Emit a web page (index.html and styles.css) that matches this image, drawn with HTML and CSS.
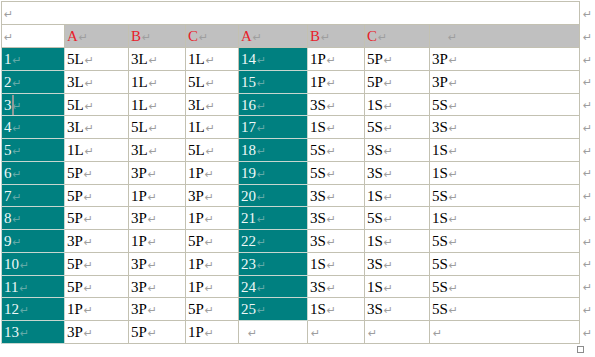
FILE: index.html
```html
<!DOCTYPE html>
<html>
<head>
<meta charset="utf-8">
<link rel="stylesheet" href="styles.css">
</head>
<body>
<div class="doc">
<table class="grid">
<colgroup>
<col class="c1"><col class="c2"><col class="c3"><col class="c4"><col class="c5"><col class="c6"><col class="c7"><col class="c8"><col class="cx">
</colgroup>
<tr class="top"><td colspan="8"><span class="pm">↵</span></td><td class="eor"><span class="pm">↵</span></td></tr>
<tr class="head"><td class="blank"><span class="pm">↵</span></td><td class="h"><span class="lbl">A</span><span class="pm">↵</span></td><td class="h"><span class="lbl">B</span><span class="pm">↵</span></td><td class="h"><span class="lbl">C</span><span class="pm">↵</span></td><td class="h"><span class="lbl">A</span><span class="pm">↵</span></td><td class="h"><span class="lbl">B</span><span class="pm">↵</span></td><td class="h"><span class="lbl">C</span><span class="pm">↵</span></td><td class="h far"><span class="pm">↵</span></td><td class="eor"><span class="pm">↵</span></td></tr>
<tr><td class="n">1<span class="pm">↵</span></td><td>5L<span class="pm">↵</span></td><td>3L<span class="pm">↵</span></td><td>1L<span class="pm">↵</span></td><td class="n">14<span class="pm">↵</span></td><td>1P<span class="pm">↵</span></td><td>5P<span class="pm">↵</span></td><td>3P<span class="pm">↵</span></td><td class="eor"><span class="pm">↵</span></td></tr>
<tr><td class="n">2<span class="pm">↵</span></td><td>3L<span class="pm">↵</span></td><td>1L<span class="pm">↵</span></td><td>5L<span class="pm">↵</span></td><td class="n">15<span class="pm">↵</span></td><td>1P<span class="pm">↵</span></td><td>5P<span class="pm">↵</span></td><td>3P<span class="pm">↵</span></td><td class="eor"><span class="pm">↵</span></td></tr>
<tr><td class="n cur">3<span class="caret"></span><span class="pm">↵</span></td><td>5L<span class="pm">↵</span></td><td>1L<span class="pm">↵</span></td><td>3L<span class="pm">↵</span></td><td class="n">16<span class="pm">↵</span></td><td>3S<span class="pm">↵</span></td><td>1S<span class="pm">↵</span></td><td>5S<span class="pm">↵</span></td><td class="eor"><span class="pm">↵</span></td></tr>
<tr><td class="n">4<span class="pm">↵</span></td><td>3L<span class="pm">↵</span></td><td>5L<span class="pm">↵</span></td><td>1L<span class="pm">↵</span></td><td class="n">17<span class="pm">↵</span></td><td>1S<span class="pm">↵</span></td><td>5S<span class="pm">↵</span></td><td>3S<span class="pm">↵</span></td><td class="eor"><span class="pm">↵</span></td></tr>
<tr><td class="n">5<span class="pm">↵</span></td><td>1L<span class="pm">↵</span></td><td>3L<span class="pm">↵</span></td><td>5L<span class="pm">↵</span></td><td class="n">18<span class="pm">↵</span></td><td>5S<span class="pm">↵</span></td><td>3S<span class="pm">↵</span></td><td>1S<span class="pm">↵</span></td><td class="eor"><span class="pm">↵</span></td></tr>
<tr><td class="n">6<span class="pm">↵</span></td><td>5P<span class="pm">↵</span></td><td>3P<span class="pm">↵</span></td><td>1P<span class="pm">↵</span></td><td class="n">19<span class="pm">↵</span></td><td>5S<span class="pm">↵</span></td><td>3S<span class="pm">↵</span></td><td>1S<span class="pm">↵</span></td><td class="eor"><span class="pm">↵</span></td></tr>
<tr><td class="n">7<span class="pm">↵</span></td><td>5P<span class="pm">↵</span></td><td>1P<span class="pm">↵</span></td><td>3P<span class="pm">↵</span></td><td class="n">20<span class="pm">↵</span></td><td>3S<span class="pm">↵</span></td><td>1S<span class="pm">↵</span></td><td>5S<span class="pm">↵</span></td><td class="eor"><span class="pm">↵</span></td></tr>
<tr><td class="n">8<span class="pm">↵</span></td><td>5P<span class="pm">↵</span></td><td>3P<span class="pm">↵</span></td><td>1P<span class="pm">↵</span></td><td class="n">21<span class="pm">↵</span></td><td>3S<span class="pm">↵</span></td><td>5S<span class="pm">↵</span></td><td>1S<span class="pm">↵</span></td><td class="eor"><span class="pm">↵</span></td></tr>
<tr><td class="n">9<span class="pm">↵</span></td><td>3P<span class="pm">↵</span></td><td>1P<span class="pm">↵</span></td><td>5P<span class="pm">↵</span></td><td class="n">22<span class="pm">↵</span></td><td>3S<span class="pm">↵</span></td><td>1S<span class="pm">↵</span></td><td>5S<span class="pm">↵</span></td><td class="eor"><span class="pm">↵</span></td></tr>
<tr><td class="n">10<span class="pm">↵</span></td><td>5P<span class="pm">↵</span></td><td>3P<span class="pm">↵</span></td><td>1P<span class="pm">↵</span></td><td class="n">23<span class="pm">↵</span></td><td>1S<span class="pm">↵</span></td><td>3S<span class="pm">↵</span></td><td>5S<span class="pm">↵</span></td><td class="eor"><span class="pm">↵</span></td></tr>
<tr><td class="n">11<span class="pm">↵</span></td><td>5P<span class="pm">↵</span></td><td>3P<span class="pm">↵</span></td><td>1P<span class="pm">↵</span></td><td class="n">24<span class="pm">↵</span></td><td>3S<span class="pm">↵</span></td><td>1S<span class="pm">↵</span></td><td>5S<span class="pm">↵</span></td><td class="eor"><span class="pm">↵</span></td></tr>
<tr><td class="n">12<span class="pm">↵</span></td><td>1P<span class="pm">↵</span></td><td>3P<span class="pm">↵</span></td><td>5P<span class="pm">↵</span></td><td class="n">25<span class="pm">↵</span></td><td>1S<span class="pm">↵</span></td><td>3S<span class="pm">↵</span></td><td>5S<span class="pm">↵</span></td><td class="eor"><span class="pm">↵</span></td></tr>
<tr><td class="n">13<span class="pm">↵</span></td><td>3P<span class="pm">↵</span></td><td>5P<span class="pm">↵</span></td><td>1P<span class="pm">↵</span></td><td class="empty"><span class="pm">↵</span></td><td><span class="pm">↵</span></td><td><span class="pm">↵</span></td><td><span class="pm">↵</span></td><td class="eor"><span class="pm">↵</span></td></tr>
</table>
<div class="handle"></div>
</div>
</body>
</html>
```

FILE: styles.css
```css
html, body {
  margin: 0;
  padding: 0;
  background: #ffffff;
}

.doc {
  padding: 1px 0 0 1px;
}

.grid {
  border-collapse: collapse;
  table-layout: fixed;
  width: 593px;
  font-family: "Liberation Serif", "Times New Roman", serif;
  font-size: 15px;
  color: #000000;
}

.c1 { width: 63px; }
.c2 { width: 64px; }
.c3 { width: 57px; }
.c4 { width: 53px; }
.c5 { width: 69px; }
.c6 { width: 57px; }
.c7 { width: 65px; }
.c8 { width: 150px; }
.cx { width: 15px; }

.grid tr {
  height: 22.77px;
}

.grid tr.top,
.grid tr.head {
  height: 23px;
}

.grid td {
  border: 1px solid #c3c1b2;
  padding: 3px 1px 0 2px;
  vertical-align: top;
  line-height: 17px;
  white-space: nowrap;
  overflow: hidden;
}

.grid td.eor {
  border: none;
  padding-left: 3px;
  overflow: visible;
}

.pm {
  font-family: "DejaVu Sans", sans-serif;
  font-size: 11px;
  color: #9e9e9e;
  margin-left: 1px;
}

.top td .pm,
.head td.blank .pm,
td.eor .pm {
  margin-left: 0;
}

.grid td.h {
  background: #c0c0c0;
}

.lbl {
  color: #e8202a;
}

.grid td.far {
  padding-left: 17px;
}

.grid td.n {
  background: #008080;
  color: #eef8f8;
  border-color: #c7d6cf;
}

.grid td.n .pm {
  color: #63aaa8;
}

.grid td.empty {
  padding-left: 8px;
}

.grid td.cur {
  position: relative;
}

.caret {
  position: absolute;
  left: 10px;
  top: 1px;
  width: 2px;
  height: 20px;
  background: #8f9a98;
}

.handle {
  width: 5px;
  height: 5px;
  border: 1px solid #8c8c8c;
  margin: 2px 0 0 576px;
}
```
